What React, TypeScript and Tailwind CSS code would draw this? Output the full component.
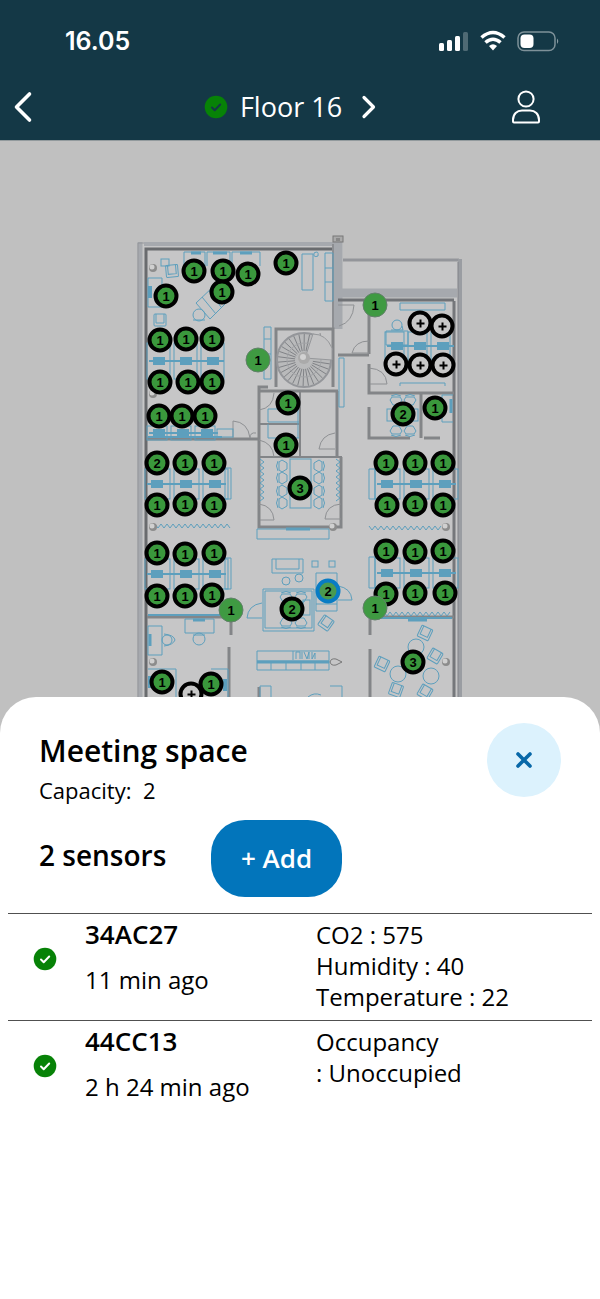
import type { ReactNode } from 'react'

type PinKind = 'sensor' | 'plain' | 'selected' | 'empty'

interface Pin {
  x: number
  y: number
  count?: number
  kind?: PinKind
}

interface Sensor {
  id: string
  seen: string
  readings: string[]
}

// Top-left corner of the plan, in plan units
const ORIGIN = { x: 130, y: 141 }

const LINE = '#5d9fbd'
const WALL = '#838588'
const PALE = '#a6a9ae'

const PINS: Pin[] = [
  { x: 194, y: 271 }, { x: 223, y: 271 }, { x: 248, y: 274 }, { x: 286, y: 263 },
  { x: 222, y: 292 }, { x: 166, y: 296 },
  { x: 160, y: 340 }, { x: 186, y: 339 }, { x: 212, y: 339 },
  { x: 160, y: 382 }, { x: 188, y: 382 }, { x: 212, y: 382 },
  { x: 159, y: 416 }, { x: 182, y: 416 }, { x: 205, y: 416 },
  { x: 258, y: 360, kind: 'plain' }, { x: 375, y: 305, kind: 'plain' },
  { x: 420, y: 323, kind: 'empty' }, { x: 442, y: 326, kind: 'empty' },
  { x: 396, y: 364, kind: 'empty' }, { x: 420, y: 365, kind: 'empty' }, { x: 443, y: 365, kind: 'empty' },
  { x: 288, y: 403 }, { x: 286, y: 445 },
  { x: 403, y: 414, count: 2 }, { x: 435, y: 408 },
  { x: 157, y: 463, count: 2 }, { x: 185, y: 463 }, { x: 214, y: 463 },
  { x: 157, y: 505 }, { x: 185, y: 504 }, { x: 214, y: 505 },
  { x: 386, y: 463 }, { x: 415, y: 463 }, { x: 443, y: 463 },
  { x: 387, y: 505 }, { x: 415, y: 504 }, { x: 443, y: 505 },
  { x: 300, y: 488, count: 3 },
  { x: 157, y: 553 }, { x: 185, y: 554 }, { x: 214, y: 553 },
  { x: 157, y: 596 }, { x: 185, y: 596 }, { x: 212, y: 595 },
  { x: 386, y: 551 }, { x: 415, y: 552 }, { x: 443, y: 551 },
  { x: 386, y: 594 }, { x: 415, y: 593 }, { x: 445, y: 593 },
  { x: 231, y: 610, kind: 'plain' }, { x: 375, y: 608, kind: 'plain' },
  { x: 292, y: 609, count: 2 }, { x: 328, y: 591, count: 2, kind: 'selected' },
  { x: 413, y: 662, count: 3 },
  { x: 162, y: 682 }, { x: 191, y: 694, kind: 'empty' }, { x: 211, y: 684 },
]

const SENSORS: Sensor[] = [
  { id: '34AC27', seen: '11 min ago', readings: ['CO2 : 575', 'Humidity : 40', 'Temperature : 22'] },
  { id: '44CC13', seen: '2 h 24 min ago', readings: ['Occupancy', ': Unoccupied'] },
]

const PIN_STYLES: Record<PinKind, string> = {
  sensor: 'border-4 border-black bg-[#3a983c]',
  plain: 'border border-[#62806a] bg-[#3f9a42]',
  selected: 'border-4 border-[#087cc4] bg-[#4a9a50]',
  empty: 'border-4 border-black bg-[#c8c8c8]',
}

function zigzag(x: number, y: number, length: number, vertical = false) {
  const points: string[] = []
  for (let i = 0; i * 3 <= length; i++) {
    const side = i % 2 ? 2 : -2
    points.push(vertical ? `${x + side},${y + i * 3}` : `${x + i * 3},${y + side}`)
  }
  return points.join(' ')
}

function CheckBadge({ tick }: { tick: string }) {
  return (
    <svg viewBox="0 0 24 24" className="h-6 w-6 shrink-0" aria-hidden="true">
      <circle cx="12" cy="12" r="11.3" fill="#078207" />
      <path d="M8 12.5l2.7 2.7 5.5-5.7" fill="none" stroke={tick} strokeWidth="2" strokeLinecap="round" strokeLinejoin="round" />
    </svg>
  )
}

// Row of three double desks with a shared monitor rail
function DeskRow({ x, y, gap = 29, tall = 42 }: { x: number; y: number; gap?: number; tall?: number }) {
  return (
    <g>
      {[0, 1, 2].map(i => (
        <g key={i}>
          <rect x={x + i * gap - 12} y={y - tall / 2 + 6} width={gap - 4} height={tall - 12} />
          <rect x={x + i * gap - 6} y={y - 4} width="12" height="8" fill={LINE} stroke="none" />
        </g>
      ))}
      <path d={`M${x - 10} ${y}H${x + gap * 2 + 11}`} strokeWidth="2" />
    </g>
  )
}

function Chair({ x, y, turn = 0 }: { x: number; y: number; turn?: number }) {
  return (
    <g transform={`translate(${x} ${y}) rotate(${turn})`}>
      <rect x="-6" y="-6" width="12" height="12" rx="1" />
      <path d="M-4 -6v9h8v-9" />
    </g>
  )
}

function Seat({ x, y, turn = 0 }: { x: number; y: number; turn?: number }) {
  return (
    <g transform={`translate(${x} ${y}) rotate(${turn})`}>
      <path d="M-4 -4h8l2 3-3 5h-6l-3-5z M-5 -5q5-3 10 0" />
    </g>
  )
}

function Column({ x, y }: { x: number; y: number }) {
  return (
    <g>
      <circle cx={x} cy={y} r="4" fill="#8c8c8c" />
      <circle cx={x - 1} cy={y - 1} r="2.5" fill="#d0d0d0" />
    </g>
  )
}

function FloorPlan() {
  const spokes = Array.from({ length: 26 }, (_, i) => (i / 26) * Math.PI * 1.72 + 0.15)
  return (
    <svg viewBox="130 141 340 591" className="block h-full w-full" aria-hidden="true">
      <path d="M138 242H333V236H343V259H461V732H138z" fill="#c6c6c7" />

      {/* outer walls */}
      <path d="M140 242V732" stroke={PALE} strokeWidth="5" />
      <path d="M138 732V243H333" fill="none" stroke="#94969a" strokeWidth="1" />
      <path d="M144 244H334" stroke={PALE} strokeWidth="4" />
      <path d="M146 732V249H333" fill="none" stroke="#696b6e" strokeWidth="3" />
      <path d="M338 238V329M338 293H457" stroke={PALE} strokeWidth="9" />
      <path d="M333 244V329" stroke="#8c8e92" strokeWidth="2" />
      <rect x="333" y="236" width="10" height="6" fill="#aaa" stroke="#777" strokeWidth="1" />
      <rect x="336" y="238" width="4" height="3" fill="#888" />
      <path d="M343 260H459" stroke="#93959a" strokeWidth="3" />
      <path d="M460 259V732" stroke="#9a9da2" strokeWidth="4" />
      <path d="M454 301V732" stroke="#75777b" strokeWidth="3" />
      <path d="M458 262V732" stroke="#808287" strokeWidth="1" />
      <path d="M338 300H454" stroke="#707276" strokeWidth="3" />

      {/* inner walls */}
      <g fill="none" stroke={WALL} strokeWidth="3">
        <path d="M276 387V329H333V387" />
        <path d="M258 391H338M341 457V527H259V387H268" />
        <path d="M258 424H299M258 457H342" strokeWidth="2" />
        <path d="M300 391V457" strokeWidth="2" />
        <path d="M338 355H369M369 301V354M369 364V393H454" />
        <path d="M369 407V438H410M424 438H440M421 393V438" />
        <path d="M147 439H258" />
        <path d="M147 617H231V635M369 617H454M370 617V635M229 647V700M370 649V700" />
        <path d="M259 687V700" />
      </g>
      <path d="M337 391V457" stroke={WALL} strokeWidth="3" />

      {/* doors */}
      <g fill="none" stroke="#8e9093" strokeWidth="1">
        <path d="M338 305H354Q353 322 339 326M369 341Q355 341 352 353M352 353H369" />
        <path d="M320 333Q321 346 333 350M369 368Q386 369 387 384H370" />
        <path d="M233 438V421Q248 422 250 438M250 438Q250 432 256 433M274 393Q273 408 259 410M259 440Q273 443 274 457" />
        <path d="M335 433Q321 435 319 449H335M259 504Q273 506 274 520H260M341 504Q326 505 325 519H341" />
      </g>

      {/* spiral stair */}
      <circle cx="304" cy="360" r="27" fill="#b9babb" stroke="#94969a" strokeWidth="2" />
      <g stroke="#808286" strokeWidth="1">
        {spokes.map(a => (
          <path
            key={a}
            d={`M${304 + Math.cos(a) * 9} ${360 + Math.sin(a) * 9}L${304 + Math.cos(a) * 26} ${360 + Math.sin(a) * 26}`}
          />
        ))}
      </g>
      <circle cx="304" cy="360" r="17" fill="none" stroke="#a2a4a7" strokeWidth="1" />
      <path d="M305 358L332 360V348Q326 334 313 334z" fill="#c3c3c4" stroke="#96989b" strokeWidth="1" />
      <circle cx="304" cy="358" r="6" fill="#aaa" />
      <circle cx="303" cy="357" r="3" fill="#d2d2d2" />

      {/* furniture */}
      <g fill="none" stroke={LINE} strokeWidth="1">
        <path d="M184 266V252H205V266M207 266V252H230V266M232 266V252H260V266" />
        <path d="M191 253h10M213 253h14M240 253h12" strokeWidth="3" />
        <path d="M148 307V278H162V307z" />
        <path d="M150 286v12" strokeWidth="4" />
        <rect x="161" y="259" width="8" height="7" />
        <Chair x={172} y={271} turn={-5} />
        <Chair x={160} y={320} />
        <path d="M196 303L214 286L226 303L210 319zM202 297L216 314M209 291L221 307" />
        <circle cx="199" cy="315" r="6" />
        <path d="M193 320h12" />
        <path d="M302 254h11v36h-11zM314 253q5-3 4 3q-5 2-4-3M325 253h8v48h-8zM325 268h8M325 282h8" />
        <path d="M264 327h7v52h-7zM264 339h7M264 354h7M339 358h5v49h-5z" />
        <path d="M400 303h45v7H400zM400 386V383H445V386" />
        <DeskRow x={159} y={361} gap={27} tall={48} />
        <DeskRow x={159} y={433} gap={24} tall={26} />
        <rect x="217" y="429" width="16" height="8" />
        <path d="M148 437H222" strokeWidth="2" />
        <DeskRow x={397} y={346} gap={23} tall={40} />
        <circle cx="397" cy="325" r="5" />
        <path d="M391 330h12l-1-4M386 331h22v14h-22z" />
        <path d="M268 409h31M268 409v13h31M268 424v14h31M298 409v29" />
        <DeskRow x={157} y={484} />
        <DeskRow x={157} y={574} />
        <DeskRow x={387} y={484} />
        <DeskRow x={387} y={573} />
        <path d="M225 468h6v31h-6zM225 558h6v31h-6zM369 469h6v30h-6zM369 557h6v31h-6z" />
        <Seat x={396} y={401} />
        <Seat x={410} y={401} />
        <Seat x={396} y={430} turn={180} />
        <Seat x={410} y={430} turn={180} />
        <rect x="387" y="409" width="31" height="12" />
        <path d="M453 395h-11v27h11" />
        <path d="M451 399v14" strokeWidth="3" />

        {/* meeting room */}
        <rect x="290" y="459" width="21" height="49" />
        {[466, 478, 491, 503].map(y => (
          <g key={y}>
            <Seat x={283} y={y} turn={-90} />
            <Seat x={318} y={y} turn={90} />
          </g>
        ))}
        <polyline points={zigzag(262, 459, 42, true)} />
        <polyline points={zigzag(338, 459, 42, true)} />
        <path d="M257 529H329V539H257z" />
        <path d="M286 529h24" strokeWidth="3" />
        <polyline points={zigzag(155, 526, 76)} />
        <polyline points={zigzag(369, 528, 72)} />
        <polyline points={zigzag(384, 614, 68)} />

        {/* lounge */}
        <path d="M272 559h31v14h-31zM276 559v10h23v-10" />
        <circle cx="286" cy="581" r="4" />
        <circle cx="299" cy="578" r="4" />
        <rect x="312" y="561" width="6" height="6" />
        <rect x="329" y="561" width="6" height="6" />
        <path d="M316 573h21v38h-21zM316 604h21M338 586q13 2 14 14h-14" />
        <path d="M263 589h51v42h-51zM265 591h47v37h-47zM262 603q-14 2-15 15h15" />
        <Seat x={286} y={598} />
        <Seat x={301} y={598} />
        <Seat x={286} y={622} turn={180} />
        <Seat x={301} y={622} turn={180} />
        <rect x="303" y="600" width="7" height="15" />
        <Chair x={326} y={623} turn={35} />
        <path d="M257 651h72v19h-72zM257 661h72M271 663v7M286 663v7M301 663v7M315 663v7" />
        <path d="M257 662h72" strokeWidth="3" />
        <path d="M293 651v9M296 659v-7h4v7M302 652v7M304 652l3 7 2-7v7M312 652v7l3-6v6" />
        <path d="M330 662q1-4 6-3l6 3-6 3q-5 1-6-3" stroke="#777" />
        <path d="M260 686h11v16h-11zM330 686h12v16h-12M308 697q6-5 13-2" />

        {/* lower rooms */}
        <path d="M148 626h14v29h-14zM185 619h29v14h-29z" />
        <path d="M150 634v12M193 620h12" strokeWidth="3" />
        <circle cx="167" cy="640" r="5" />
        <path d="M164 634q10 1 11 6q-2 5-11 6" />
        <circle cx="199" cy="639" r="6" />
        <path d="M193 635h12" />
        <path d="M148 615H222M376 618H452" strokeWidth="2" />
        <path d="M408 620h19" strokeWidth="3" />
        <path d="M148 669h28v31M211 669h17v31h-14" />
        <path d="M225 679v12M150 676v12" strokeWidth="4" />
        <Chair x={425} y={633} turn={25} />
        <Chair x={435} y={656} turn={30} />
        <Chair x={382} y={664} turn={25} />
        <Chair x={396} y={690} turn={20} />
        <Chair x={425} y={692} turn={30} />
        <circle cx="416" cy="647" r="8" />
        <circle cx="398" cy="674" r="8" />
        <circle cx="431" cy="676" r="8" />
      </g>

      <Column x={153} y={268} />
      <Column x={153} y={394} />
      <Column x={153} y={527} />
      <Column x={153} y={662} />
      <Column x={333} y={527} />
      <Column x={446} y={527} />
      <Column x={446} y={662} />
    </svg>
  )
}

function MapPin({ x, y, count = 1, kind = 'sensor' }: Pin) {
  return (
    <button
      type="button"
      aria-label={kind === 'empty' ? 'Add sensor' : undefined}
      className={`absolute flex h-[25px] w-[25px] -translate-x-1/2 -translate-y-1/2 items-center justify-center rounded-full font-['Liberation_Sans',sans-serif] text-[13px] font-bold leading-none text-black ${PIN_STYLES[kind]}`}
      style={{ left: x - ORIGIN.x, top: y - ORIGIN.y }}
    >
      {kind === 'empty' ? (
        <svg viewBox="0 0 10 10" className="h-[10px] w-[10px] shrink-0" aria-hidden="true">
          <path d="M5 1v8M1 5h8" stroke="#000" strokeWidth="2" />
        </svg>
      ) : (
        count
      )}
    </button>
  )
}

function StatusBar() {
  return (
    <div className="flex h-[74px] items-center justify-between pl-[65px] pr-10 pt-2">
      <span className="font-['Inter',sans-serif] text-[25px] font-semibold leading-8">16.05</span>
      <svg viewBox="0 0 122 24" className="h-6 w-[122px]" aria-hidden="true">
        <g fill="#fff">
          <rect x="1" y="14" width="5" height="8" rx="1.5" />
          <rect x="9" y="11" width="5" height="11" rx="1.5" />
          <rect x="17" y="7" width="5" height="15" rx="1.5" />
          <rect x="25" y="3" width="5" height="19" rx="1.5" opacity=".25" />
        </g>
        <g fill="none" stroke="#fff" strokeWidth="3.6">
          <path d="M43.5 8.5Q55 -1.5 66.5 8.5" />
          <path d="M47.5 13.5Q55 7 62.5 13.5" />
        </g>
        <path d="M51 17Q55 13.5 59 17L55 21.5z" fill="#fff" />
        <rect x="80" y="3" width="37" height="18.5" rx="6" fill="none" stroke="#fff" strokeOpacity=".45" strokeWidth="1.5" />
        <rect x="82.5" y="5.500" width="13" height="13.5" rx="4" fill="#fff" />
        <path d="M119 9.500q2.500 2.500 0 5.500z" fill="#fff" opacity=".5" />
      </svg>
    </div>
  )
}

function IconButton({ label, children }: { label: string; children: ReactNode }) {
  return (
    <button type="button" aria-label={label} className="flex h-9 shrink-0 items-center justify-center">
      {children}
    </button>
  )
}

function NavBar() {
  return (
    <nav className="grid h-[66px] grid-cols-[1fr_auto_1fr] items-center pl-[13px] pr-[59px]">
      <div className="flex">
        <IconButton label="Back">
          <svg viewBox="0 0 20 32" className="h-8 w-5" fill="none" stroke="#fff" strokeWidth="3.6" strokeLinecap="round" strokeLinejoin="round">
            <path d="M16.5 3L3.5 16L16.5 29" />
          </svg>
        </IconButton>
      </div>
      <div className="ml-7 flex items-center">
        <CheckBadge tick="#143846" />
        <h1 className="ml-3 text-[27px] leading-9">Floor 16</h1>
        <div className="ml-[18px] flex">
          <IconButton label="Next floor">
            <svg viewBox="0 0 18 26" className="h-[26px] w-[18px]" fill="none" stroke="#fff" strokeWidth="3.2" strokeLinecap="round" strokeLinejoin="round">
              <path d="M4 3.5L13.5 13L4 22.5" />
            </svg>
          </IconButton>
        </div>
      </div>
      <div className="flex justify-end">
        <IconButton label="Account">
          <svg viewBox="0 0 30 36" className="h-9 w-[30px]" fill="none" stroke="#fff" strokeWidth="2" strokeLinejoin="round">
            <circle cx="15" cy="10" r="7.6" />
            <path d="M2 32.5V31C2 25 6 21.5 11 21.5H19C24 21.5 28 25 28 31V32.5Q28 33.5 27 33.5H3Q2 33.5 2 32.5z" />
          </svg>
        </IconButton>
      </div>
    </nav>
  )
}

function SensorTable() {
  return (
    <table className="w-full border-collapse text-left text-2xl leading-[31px]">
      <tbody>
        {SENSORS.map(s => (
          <tr key={s.id} className="h-[107px] border-t border-[#505050] align-top">
            <td className="w-[77px] pb-4 pl-[25px] align-middle">
              <CheckBadge tick="#fff" />
            </td>
            <th scope="row" className="w-[231px] pt-[5px] font-normal">
              <p className="text-[26px] font-semibold">{s.id}</p>
              <p className="mt-[14px]">{s.seen}</p>
            </th>
            <td className="pt-[5px]">
              {s.readings.map(r => (
                <p key={r}>{r}</p>
              ))}
            </td>
          </tr>
        ))}
      </tbody>
    </table>
  )
}

export default function App() {
  return (
    <div className="flex min-h-screen flex-col bg-[#c0c0c0] font-['Open_Sans',sans-serif] text-black">
      <header className="bg-[#143846] text-white">
        <StatusBar />
        <NavBar />
      </header>

      <main className="flex flex-1 flex-col">
        <div className="overflow-hidden border-t border-[#929a9d]">
          <div className="relative mx-auto h-[591px] w-[340px]">
            <FloorPlan />
            {PINS.map(p => (
              <MapPin key={`${p.x}-${p.y}`} {...p} />
            ))}
          </div>
        </div>

        <section className="relative -mt-[35px] flex-1 rounded-t-[36px] bg-white px-2 pt-[26px]">
          <div className="flex items-start justify-between px-[31px]">
            <div className="pt-2">
              <h2 className="text-[30px] font-semibold leading-10">Meeting space</h2>
              <p className="mt-1 whitespace-pre text-[22px] leading-[30px]">Capacity:  2</p>
            </div>
            <button
              type="button"
              aria-label="Close"
              className="flex h-[74px] w-[74px] shrink-0 items-center justify-center rounded-full bg-[#dcf2fd]"
            >
              <svg viewBox="0 0 18 18" className="h-[18px] w-[18px]" aria-hidden="true">
                <path d="M3 3l12 12M15 3L3 15" stroke="#0868a8" strokeWidth="3.6" strokeLinecap="round" />
              </svg>
            </button>
          </div>

          <div className="mb-4 mt-[15px] flex items-center pl-[31px]">
            <h3 className="w-[172px] pb-2 text-[28px] font-semibold leading-8">2 sensors</h3>
            <button type="button" className="h-[77px] rounded-[34px] bg-[#0275bb] px-[30px] text-[26px] font-semibold text-white">
              + Add
            </button>
          </div>

          <SensorTable />
        </section>
      </main>
    </div>
  )
}
